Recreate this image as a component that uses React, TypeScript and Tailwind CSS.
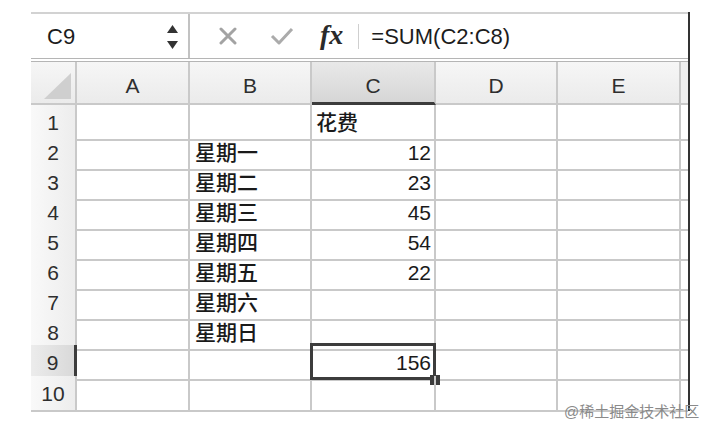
import React from "react";

const font = { fontFamily: '"Liberation Sans", "Noto Sans CJK SC", Arial, sans-serif' };

const rows = [
  { n: 1, b: "", c: "花费", left: true },
  { n: 2, b: "星期一", c: "12" },
  { n: 3, b: "星期二", c: "23" },
  { n: 4, b: "星期三", c: "45" },
  { n: 5, b: "星期四", c: "54" },
  { n: 6, b: "星期五", c: "22" },
  { n: 7, b: "星期六", c: "" },
  { n: 8, b: "星期日", c: "" },
  { n: 9, b: "", c: "156", selected: true },
  { n: 10, b: "", c: "" },
];

const grid = "grid grid-cols-[46px_113px_122px_124px_122px_123px_7px]";
const line = "border-r-2 border-b-2 border-[#c9c9c9]";

function ColHeader({ label, active }: { label: string; active?: boolean }) {
  return (
    <div
      className={`flex h-[43px] items-center justify-center border-r-2 pt-[7px] text-[21px] text-[#2e2e2e] ${
        active
          ? "border-b-[3px] border-r-[#c9c9c9] border-b-[#3c3c3c] bg-linear-to-b from-[#e9e9e9] to-[#d6d6d6]"
          : "border-b-2 border-[#c9c9c9] bg-linear-to-b from-[#f6f6f6] to-[#ebebeb]"
      }`}
    >
      {label}
    </div>
  );
}

export default function App() {
  return (
    <div className="relative h-[433px] w-[713px] overflow-hidden bg-white" style={font}>
      <div className="ml-[31px] mt-[12px] w-[659px] border-r-2 border-[#333]">
        {/* Formula bar */}
        <div className="flex h-[46px] border-t-2 border-[#d2d2d2]">
          <div className="flex w-[159px] items-center justify-between border-r-2 border-[#c2c2c2] pl-[16px] pr-[10px]">
            <span className="pt-[1px] text-[22px] text-[#1c1c1c]">C9</span>
            <div className="flex flex-col gap-[8px] pt-[1px]">
              <svg width="11" height="8" viewBox="0 0 11 8">
                <polygon points="5.5,0 11,8 0,8" fill="#333" />
              </svg>
              <svg width="11" height="8" viewBox="0 0 11 8">
                <polygon points="0,0 11,0 5.5,8" fill="#333" />
              </svg>
            </div>
          </div>
          <div className="flex items-center">
            <svg width="18" height="18" viewBox="0 0 18 18" className="ml-[29px]">
              <path d="M2 2 L16 16 M16 2 L2 16" stroke="#a3a3a3" strokeWidth="3" strokeLinecap="round" />
            </svg>
            <svg width="24" height="18" viewBox="0 0 24 18" className="ml-[33px]">
              <path d="M2 9 L9 16 L22 2" stroke="#ababab" strokeWidth="3" fill="none" strokeLinejoin="round" />
            </svg>
            <span
              className="ml-[26px] pb-[2px] text-[28px] font-semibold italic text-[#2a2a2a]"
              style={{ fontFamily: '"Liberation Serif", "DejaVu Serif", serif' }}
            >
              fx
            </span>
            <div className="ml-[15px] h-[25px] w-[1px] bg-[#cfcfcf]" />
            <span className="ml-[12px] pt-[1px] text-[22px] text-[#1c1c1c]">=SUM(C2:C8)</span>
          </div>
        </div>
        <div className="h-[4px] border-y border-[#b5b5b5]" />

        {/* Column headers */}
        <div className={grid}>
          <div className="flex h-[43px] items-end justify-end border-r-2 border-b-2 border-[#c9c9c9] bg-linear-to-b from-[#f6f6f6] to-[#ebebeb] pb-[4px] pr-[4px]">
            <svg width="27" height="26" viewBox="0 0 27 26">
              <polygon points="27,0 27,26 0,26" fill="#cfcfcf" />
            </svg>
          </div>
          <ColHeader label="A" />
          <ColHeader label="B" />
          <ColHeader label="C" active />
          <ColHeader label="D" />
          <ColHeader label="E" />
          <div className="h-[43px] border-b-2 border-[#c9c9c9] bg-[#efefef]" />
        </div>

        {/* Rows */}
        {rows.map((r) => (
          <div key={r.n} className={`${grid} ${r.n >= 9 ? "h-[31px]" : "h-[30px]"} text-[21px] text-[#1a1a1a]`}>
            <div
              className={`flex items-center justify-center pt-[2px] text-[#2e2e2e] ${
                r.selected
                  ? "border-b-2 border-r-[3px] border-b-[#c9c9c9] border-r-[#3c3c3c] bg-linear-to-r from-[#ececec] to-[#d9d9d9]"
                  : `${line} bg-linear-to-r from-[#f9f9f9] to-[#ededed]`
              }`}
            >
              {r.n}
            </div>
            <div className={line} />
            <div className={`${line} flex items-center pl-[5px] pt-[2px] font-medium`}>{r.b}</div>
            <div
              className={`${line} relative flex items-center pt-[2px] ${
                r.left ? "pl-[4px] font-medium" : "justify-end pr-[3px]"
              }`}
            >
              {r.c}
              {r.selected && (
                <>
                  <div className="absolute -left-[2px] -top-[2px] -right-[2px] -bottom-[1px] border-[3px] border-[#3c3c3c]" />
                  <div className="absolute -bottom-[6px] -right-[6px] h-[10px] w-[10px] bg-[#3c3c3c]" />
                </>
              )}
            </div>
            <div className={line} />
            <div className={line} />
            <div className="border-b-2 border-[#c9c9c9]" />
          </div>
        ))}
        <div className={`${grid} h-[4px]`}>
          <div className="border-r-2 border-[#c9c9c9]" />
          <div className="border-r-2 border-[#c9c9c9]" />
          <div className="border-r-2 border-[#c9c9c9]" />
          <div className="border-r-2 border-[#c9c9c9]" />
          <div className="border-r-2 border-[#c9c9c9]" />
          <div />
          <div />
        </div>
      </div>

      <div className="absolute left-[564px] top-[401px] text-[15px] text-[#8a8a8a]">@稀土掘金技术社区</div>
    </div>
  );
}
